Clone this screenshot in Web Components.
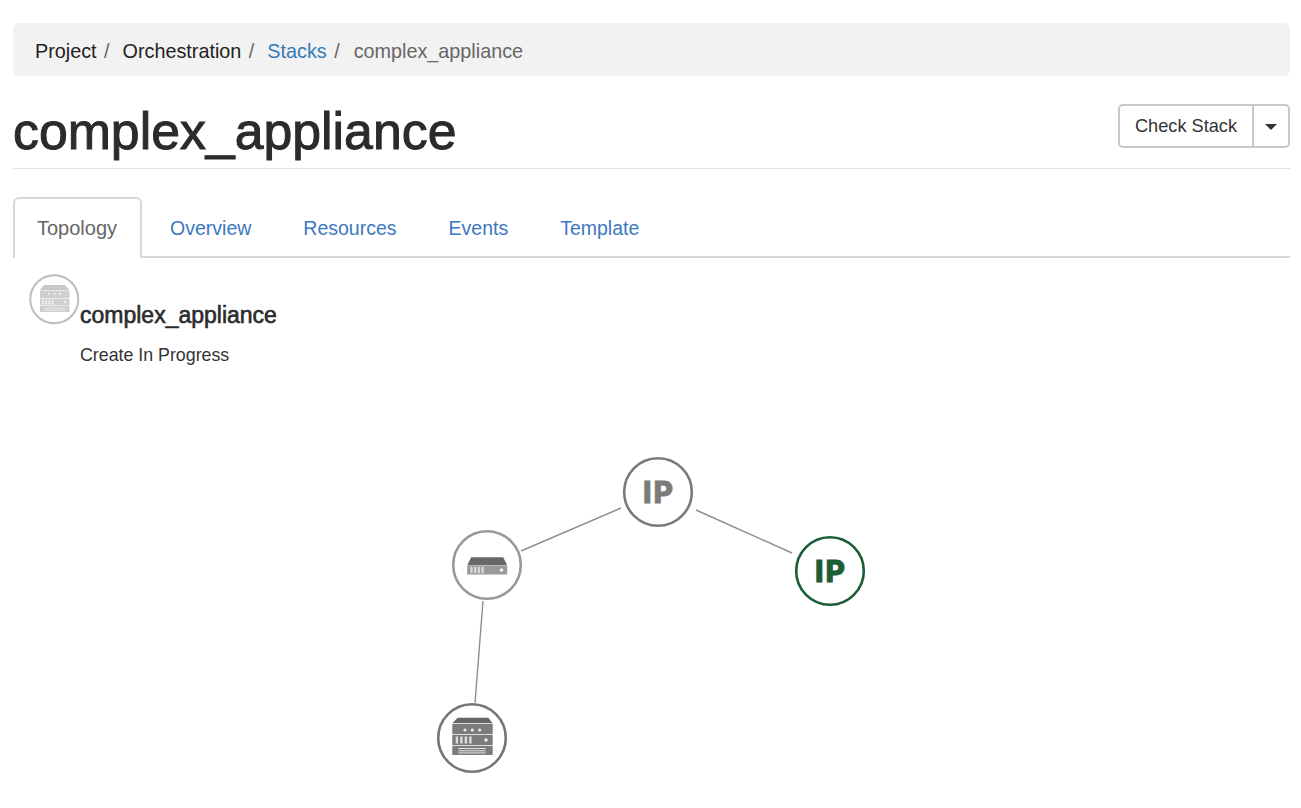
<!DOCTYPE html>
<html lang="en"><head><meta charset="utf-8"><title>complex_appliance</title>
<style>
html,body{margin:0;padding:0;background:#fff;height:808px;overflow:hidden}
body{font-family:"Liberation Sans",Arial,sans-serif;color:#333;font-size:18.2px}
</style></head><body>
<stack-page>
  <app-breadcrumb>
    <crumb-item>Project</crumb-item>
    <crumb-item>Orchestration</crumb-item>
    <crumb-item link>Stacks</crumb-item>
    <crumb-item current>complex_appliance</crumb-item>
  </app-breadcrumb>
  <page-header heading="complex_appliance">
    <split-button label="Check Stack"></split-button>
  </page-header>
  <nav-tabs>
    <tab-item active>Topology</tab-item>
    <tab-item>Overview</tab-item>
    <tab-item>Resources</tab-item>
    <tab-item>Events</tab-item>
    <tab-item>Template</tab-item>
  </nav-tabs>
  <topology-pane heading="complex_appliance" status="Create In Progress">
    <topo-node kind="ip" x="658" y="234" color="#7a7a7a"></topo-node>
    <topo-node kind="ip" x="830" y="313" color="#1a5c34"></topo-node>
    <topo-node kind="server" x="486.7" y="307" color="#999999"></topo-node>
    <topo-node kind="stack" x="472" y="480" color="#757575"></topo-node>
  </topology-pane>
</stack-page>
<script>
const def=(name,html)=>{
  customElements.define(name,class extends HTMLElement{
    constructor(){super();this.attachShadow({mode:'open'});if(typeof html!=='function')this.shadowRoot.innerHTML=html;}
    connectedCallback(){
      if(typeof html==='function')this.shadowRoot.innerHTML=html(this);
    }
  });
};
def('stack-page',`<style>:host{display:flex;flex-direction:column;padding:23px 11px 0 13px;box-sizing:border-box;height:808px}</style><slot></slot>`);
def('app-breadcrumb',`<style>:host{display:flex;align-items:center;height:53px;background:#f2f2f2;border-radius:6px;padding:4px 22px 0;box-sizing:border-box;font-size:19.8px}</style><slot></slot>`);
def('crumb-item',el=>{
  const link=el.hasAttribute('link'),cur=el.hasAttribute('current');
  return `<style>:host{display:inline-block;color:${link?'#337ab7':cur?'#666':'#222'};white-space:nowrap;${cur?'margin-left:1px;':''}}
  .s{color:#666;padding:0 7px 0 7.5px;display:inline-block;width:11.5px;text-align:left}
  </style><slot></slot>${cur?'':'<span class="s">/</span>'}`;
});
def('page-header',el=>`<style>:host{display:flex;justify-content:space-between;align-items:flex-start;height:93px;box-sizing:border-box;border-bottom:1.5px solid #e2e2e2}
  h1{margin:0;font-size:51.8px;font-weight:400;-webkit-text-stroke:1px #2b2b2b;line-height:51px;color:#2b2b2b;padding-top:30px;font-family:"Liberation Sans",Arial,sans-serif}
  .r{padding-top:28px}</style><h1>${el.getAttribute('heading')}</h1><div class="r"><slot></slot></div>`);
def('split-button',el=>`<style>:host{display:flex;height:44px;border:2px solid #c8c8c8;border-radius:5px;box-sizing:border-box;background:#fff;color:#333}
  .m{width:132px;padding-top:0;display:flex;align-items:center;justify-content:center;border-right:2px solid #c8c8c8}
  .c{width:34px;padding-top:1px;display:flex;align-items:center;justify-content:center}
  .c svg{display:block}</style><div class="m">${el.getAttribute('label')}</div><div class="c"><svg width="12" height="6" viewBox="0 0 12 6"><path d="M0 0H12L6 6Z" fill="#333"/></svg></div>`);
def('nav-tabs',`<style>:host{display:flex;gap:5px;margin-top:26px;height:63px;box-sizing:border-box;border-bottom:2px solid #d8d8d8;align-items:flex-end;font-size:19.5px}</style><slot></slot>`);
def('tab-item',el=>{
  const a=el.hasAttribute('active');
  return `<style>:host{display:flex;align-items:center;box-sizing:border-box;white-space:nowrap;
  color:${a?'#666':'#3b78c2'};
  ${a?'height:61px;margin-bottom:-2px;font-size:20px;padding:0 22.5px 0 22px;background:#fff;border:2px solid #d8d8d8;border-bottom:0;border-radius:6px 6px 0 0;':'height:59px;padding:3px 23.5px 0;'}}</style><slot></slot>`;
});
const ICON={
 server:c=>`<path d="M19.2 27.2H51.2L55.2 35.2H15.2Z" fill="#686868"/><path d="M15.2 35.5H55.2V44.5H15.2Z" fill="#999"/>
   <g fill="#d8d8d8"><rect x="18.3" y="36.8" width="2.4" height="6.4"/><rect x="22" y="36.8" width="2.4" height="6.4"/><rect x="25.7" y="36.8" width="2.4" height="6.4"/><rect x="29.4" y="36.8" width="2.4" height="6.4"/></g><circle cx="49.5" cy="40" r="1.8" fill="#f4f4f4"/>`,
 stack:c=>`<path d="M20.7 14.7H51.3L55.7 20.3H15.3Z" fill="#666"/><path d="M15.3 21H55.7V31.3H15.3Z" fill="#7c7c7c"/>
   <g fill="#dff0ea"><circle cx="28" cy="27" r="1.6"/><circle cx="35.3" cy="27" r="1.6"/><circle cx="42.7" cy="27" r="1.6"/></g>
   <path d="M15.3 32H55.7V42.3H15.3Z" fill="#7c7c7c"/><g fill="#ddd"><rect x="18.7" y="33.5" width="2.4" height="7"/><rect x="23.2" y="33.5" width="2.4" height="7"/><rect x="27.7" y="33.5" width="2.4" height="7"/><rect x="32.2" y="33.5" width="2.4" height="7"/></g><circle cx="49" cy="37" r="1.7" fill="#eef"/>
   <path d="M15.3 43H55.7V52H15.3Z" fill="#7c7c7c"/><g fill="#e4e4e4"><rect x="21.3" y="45" width="27.4" height="1"/><rect x="21.3" y="47.3" width="27.4" height="1"/><rect x="21.3" y="49.4" width="27.4" height="1"/></g>`
};
def('topo-node',el=>{
  const c=el.getAttribute('color'),k=el.getAttribute('kind'),x=+el.getAttribute('x'),y=+el.getAttribute('y');
  const inner=k==='ip'?`<text x="36" y="45.5" text-anchor="middle" opacity=".99" font-family="Inter,'Open Sans',sans-serif" font-weight="800" font-size="30" letter-spacing="2" fill="${c}" stroke="${c}" stroke-width=".8">IP</text>`:ICON[k](c);
  return `<style>:host{position:absolute;left:${x-35}px;top:${y-35}px;width:70px;height:70px;display:block}svg{display:block;overflow:visible}</style>
  <svg width="70" height="70" viewBox="0 0 70 70"><circle cx="35" cy="35" r="33.8" fill="#fff" stroke="${c}" stroke-width="2.6"/>${inner}</svg>`;
});
def('topology-pane',el=>`<style>:host{display:block;position:relative;height:550px;margin-left:-13px;margin-right:-11px}
  .sum{display:flex;align-items:flex-start;padding:16px 0 0 29px}
  .t{padding-top:28px;margin-left:-1px}
  .t h3{margin:0;font-size:23px;font-weight:400;-webkit-text-stroke:.6px #2b2b2b;line-height:26px;color:#2b2b2b}
  .t p{margin:15px 0 0;font-size:17.8px;line-height:24px;color:#333}
  svg.lines{position:absolute;left:0;top:0;pointer-events:none}
  svg.i{display:block;flex:none}</style>
  <div class="sum"><svg class="i" width="52" height="52" viewBox="0 0 52 52"><circle cx="25.3" cy="25.3" r="24" fill="#fff" stroke="#bcbcbc" stroke-width="2"/>
    <path d="M15 11H36L40.5 16H11Z" fill="#c8c8c8"/><path d="M11 16.5H40.5V24H11Z" fill="#cfcfcf"/><g fill="#f4f4f4"><circle cx="20" cy="20" r="1.1"/><circle cx="25.5" cy="20" r="1.1"/><circle cx="31" cy="20" r="1.1"/></g>
    <path d="M11 24.6H40.5V31.5H11Z" fill="#cfcfcf"/><g fill="#f2f2f2"><rect x="13" y="25.6" width="1.7" height="5"/><rect x="16.2" y="25.6" width="1.7" height="5"/><rect x="19.4" y="25.6" width="1.7" height="5"/><rect x="22.6" y="25.6" width="1.7" height="5"/></g><circle cx="36" cy="28" r="1.2" fill="#f2f2f2"/>
    <path d="M11 32H40.5V38H11Z" fill="#cfcfcf"/><g fill="#eee"><rect x="15" y="33.6" width="21" height=".8"/><rect x="15" y="35.6" width="21" height=".8"/></g></svg>
    <div class="t"><h3>${el.getAttribute('heading')}</h3><p>${el.getAttribute('status')}</p></div></div>
  <svg class="lines" width="1301" height="550" viewBox="0 0 1301 550" fill="none" stroke="#8e8e8e" stroke-width="1.4"><path d="M521 293L621 250"/><path d="M696 252L792 295"/><path d="M483 343L475 445"/></svg>
  <slot></slot>`);
</script>
</body></html>
